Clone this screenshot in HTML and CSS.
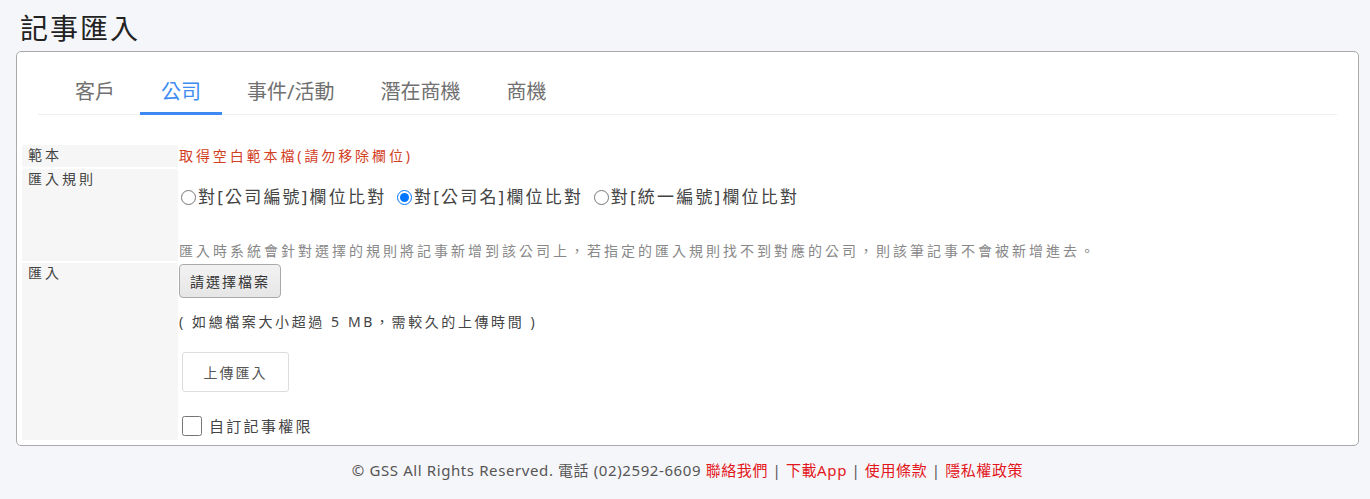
FILE: index.html
```html
<!DOCTYPE HTML>
<html lang="zh-Hant">
  <head>
    <meta charset="utf-8">
    <link rel="stylesheet" href="styles.css">
  </head>
  <body>
    <h1 class="title">記事匯入</h1>
    <div class="card">
      <ul class="tabs">
        <li class="tab">客戶</li>
        <li class="tab active">公司</li>
        <li class="tab">事件/活動</li>
        <li class="tab">潛在商機</li>
        <li class="tab">商機</li>
      </ul>
      <table class="form">
        <tr class="row-tpl">
          <th>範本</th>
          <td><a class="tpl-link" href="#">取得空白範本檔(請勿移除欄位)</a></td>
        </tr>
        <tr class="row-rule">
          <th>匯入規則</th>
          <td>
            <div class="rules">
              <label><input type="radio" name="rule">對[公司編號]欄位比對</label>
              <label><input type="radio" name="rule" checked>對[公司名]欄位比對</label>
              <label><input type="radio" name="rule">對[統一編號]欄位比對</label>
            </div>
            <p class="help">匯入時系統會針對選擇的規則將記事新增到該公司上，若指定的匯入規則找不到對應的公司，則該筆記事不會被新增進去。</p>
          </td>
        </tr>
        <tr class="row-import">
          <th>匯入</th>
          <td>
            <button class="btn-file" type="button">請選擇檔案</button>
            <p class="note">( 如總檔案大小超過 5 MB，需較久的上傳時間 )</p>
            <button class="btn-upload" type="button">上傳匯入</button>
            <label class="perm"><input type="checkbox">自訂記事權限</label>
          </td>
        </tr>
      </table>
    </div>
    <div class="footer">
      © GSS All Rights Reserved. 電話 (02)2592-6609
      <a href="#">聯絡我們</a> | <a href="#">下載App</a> | <a href="#">使用條款</a> | <a href="#">隱私權政策</a>
    </div>
  </body>
</html>
```

FILE: styles.css
```css
body { margin:0; padding:0 11px 0 16px; background:#f5f6fa; color:#444;
  font:14px "Noto Sans","Noto Sans CJK TC",sans-serif; }
.title { margin:0; padding:8px 0 0 4px; font-size:28px; line-height:40px; font-weight:normal;
  letter-spacing:2px; color:#222; }
.card { margin-top:3px; background:white; border:1px solid #aaa; border-radius:5px;
  padding:14px 5px 3px 5px; }
.tabs { list-style:none; margin:0 16px; padding:0 0 0 16px; display:flex; gap:4px;
  border-bottom:1px solid #eee; }
.tab { padding:15px 21px 9px; font-size:20px; line-height:22px; color:#707070;
  border-bottom:3px solid transparent; margin-bottom:-1px; }
.tab.active { color:#3d8bf2; border-bottom-color:#3d8bf2; }
.form { width:100%; margin-top:28px; border-collapse:separate; border-spacing:0 2px; }
.form th { width:150px; padding:0 0 0 6px; background:#f6f6f6; text-align:left; font-weight:normal;
  vertical-align:top; line-height:20px; letter-spacing:3px; color:#444; }
.form td { padding:0 0 0 1px; vertical-align:top; }
.tpl-link { color:#d2401f; text-decoration:none; line-height:22px; letter-spacing:2.9px; display:block; }
.rules { padding-top:16px; font-size:17px; line-height:24px; letter-spacing:2.2px; color:#444; }
.rules label { margin-right:2px; }
.rules input { width:15px; height:15px; margin:0 2px 0 2px; vertical-align:-2px; }
.help { margin:32px 0 0; line-height:20px; color:#888; letter-spacing:3px; }
.row-import td { padding-top:1px; padding-bottom:2px; }
button { font:inherit; letter-spacing:2px; cursor:pointer; }
.btn-file { display:block; height:34px; padding:0 10px; background:linear-gradient(#f2f2f2,#e6e6e6);
  border:1px solid #aaa; border-radius:4px; color:#333; }
.note { margin:14px 0 0; line-height:20px; letter-spacing:2.6px; }
.btn-upload { display:block; margin:20px 0 0 3px; height:40px; width:107px; background:white;
  border:1px solid #ddd; border-radius:3px; color:#555; }
.perm { display:flex; align-items:center; margin:22px 0 0 3px; line-height:24px; font-size:15px;
  letter-spacing:2.3px; }
.perm input { width:20px; height:20px; margin:0 7px 0 0; }
.footer { margin-top:14px; text-align:center; font-size:15px; line-height:20px; color:#555;
  letter-spacing:0.6px; }
.footer a { color:#e3161b; text-decoration:none; }
```
